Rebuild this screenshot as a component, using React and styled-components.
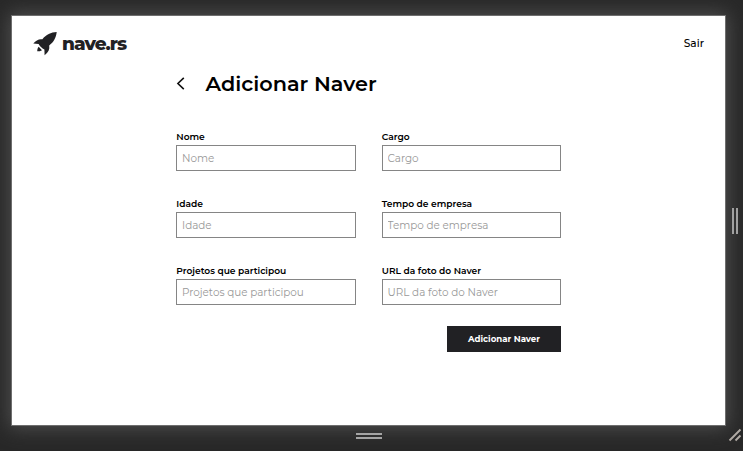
import React from "react";
import styled, { createGlobalStyle } from "styled-components";

const GlobalStyle = createGlobalStyle`
  * { box-sizing: border-box; }
  html, body, #root { height: 100%; }
  body { margin: 0; background: #282828; overflow: hidden; font-family: Montserrat, Inter, sans-serif; color: #000; }
`;

const Stage = styled.div`
  display: grid;
  grid-template: 15px 411px 25px / 11px 715px 17px;
  width: 743px;
  height: 451px;
  background: #282828;
`;

const Screen = styled.main`
  grid-area: 2 / 2;
  background: #fff;
  border: 1px solid #6e6e6e;
  box-shadow: 0 0 18px 2px #505050;
`;

const SideHandle = styled.div`
  grid-area: 2 / 3;
  place-self: center;
  width: 6px;
  height: 26px;
  border: solid #a0a0a0;
  border-width: 0 2px;
  z-index: 1;
`;

const BottomHandle = styled.div`
  grid-area: 3 / 2;
  justify-self: center;
  width: 26px;
  height: 6px;
  margin-top: 7px;
  border: solid #a5a5a5;
  border-width: 2px 0;
  z-index: 1;
`;

const CornerHandle = styled.svg`
  grid-area: 3 / 3;
  width: 14px;
  height: 14px;
  margin: 2px 0 0 2px;
  z-index: 1;
`;

const Header = styled.header`
  display: flex;
  justify-content: space-between;
  height: 50px;
  padding: 15px 21px 0 21px;
`;

const Brand = styled.div`
  display: flex;
  height: 26px;
`;

const Rocket = styled.svg`
  width: 24px;
  height: 25px;
`;

const Wordmark = styled.span`
  margin-left: 5px;
  font-size: 18.5px;
  font-weight: 800;
  line-height: 26px;
  letter-spacing: -0.95px;
  color: #212124;
`;

const Logout = styled.a`
  font-size: 10.6px;
  font-weight: 500;
  line-height: 25px;
`;

const Content = styled.form`
  width: 385px;
  margin-left: 164px;
`;

const TitleRow = styled.div`
  display: flex;
  align-items: center;
  height: 36px;
`;

const Back = styled.svg`
  width: 9px;
  height: 13px;
  margin: 0 20.5px 2px 0;
`;

const Title = styled.h1`
  margin: 0;
  font-size: 20.8px;
  font-weight: 600;
  line-height: 36px;
  white-space: nowrap;
`;

const Fields = styled.div`
  display: grid;
  grid-template-columns: 180px 179.5px;
  column-gap: 25.5px;
  row-gap: 25px;
  padding-top: 27px;
`;

const Field = styled.label`
  display: flex;
  flex-direction: column;
  height: 42px;
`;

const Caption = styled.span`
  height: 16px;
  padding-left: 0.3px;
  font-size: 9.1px;
  font-weight: 600;
  line-height: 16px;
  white-space: nowrap;
`;

const Input = styled.input`
  height: 26px;
  width: 100%;
  padding: 0 5px;
  border: 1px solid #858585;
  border-radius: 0;
  outline: 0;
  background: #fff;
  font: 400 10.4px Montserrat, Inter, sans-serif;
  &::placeholder { color: #989898; opacity: 1; }
`;

const Submit = styled.button`
  display: block;
  width: 114px;
  height: 26px;
  margin: 21px 0 0 auto;
  padding: 0;
  border: 0;
  background: #212124;
  color: #fff;
  font: 700 8.6px Montserrat, Inter, sans-serif;
`;

const fields = [
  "Nome",
  "Cargo",
  "Idade",
  "Tempo de empresa",
  "Projetos que participou",
  "URL da foto do Naver",
];

export default function App() {
  return (
    <Stage>
      <GlobalStyle />
      <Screen>
        <Header>
          <Brand>
            <Rocket viewBox="0 0 24 25" fill="#212124">
              <path d="M23.7 1C18 1.3 13 3.5 9.4 8.3 6 7.6 3 9.4.3 12.6L5.6 12.9 6.9 15 9.6 17.6 11.4 18.4 11.6 24.2C15.4 21.4 16.9 18 16.2 14.4 20.8 11 23.1 6.7 23.7 1Z" />
              <path d="M5.7 15.7 9 19.2C7.7 20.2 6 20.3 4.2 20.3 4.3 18.4 4.6 16.9 5.7 15.7Z" />
            </Rocket>
            <Wordmark>nave.rs</Wordmark>
          </Brand>
          <Logout>Sair</Logout>
        </Header>
        <Content>
          <TitleRow>
            <Back viewBox="0 0 9 13" fill="none" stroke="#111" strokeWidth="1.6">
              <path d="M7.8.8 1.9 6.5l5.9 5.7" />
            </Back>
            <Title>Adicionar Naver</Title>
          </TitleRow>
          <Fields>
            {fields.map((label) => (
              <Field key={label}>
                <Caption>{label}</Caption>
                <Input placeholder={label} />
              </Field>
            ))}
          </Fields>
          <Submit type="button">Adicionar Naver</Submit>
        </Content>
      </Screen>
      <SideHandle />
      <BottomHandle />
      <CornerHandle viewBox="0 0 14 14" stroke="#b0aaa4" strokeWidth="1.9">
        <path d="M1.5 12.5 12.5 1.5M7.5 12.5l5-5" />
      </CornerHandle>
    </Stage>
  );
}
